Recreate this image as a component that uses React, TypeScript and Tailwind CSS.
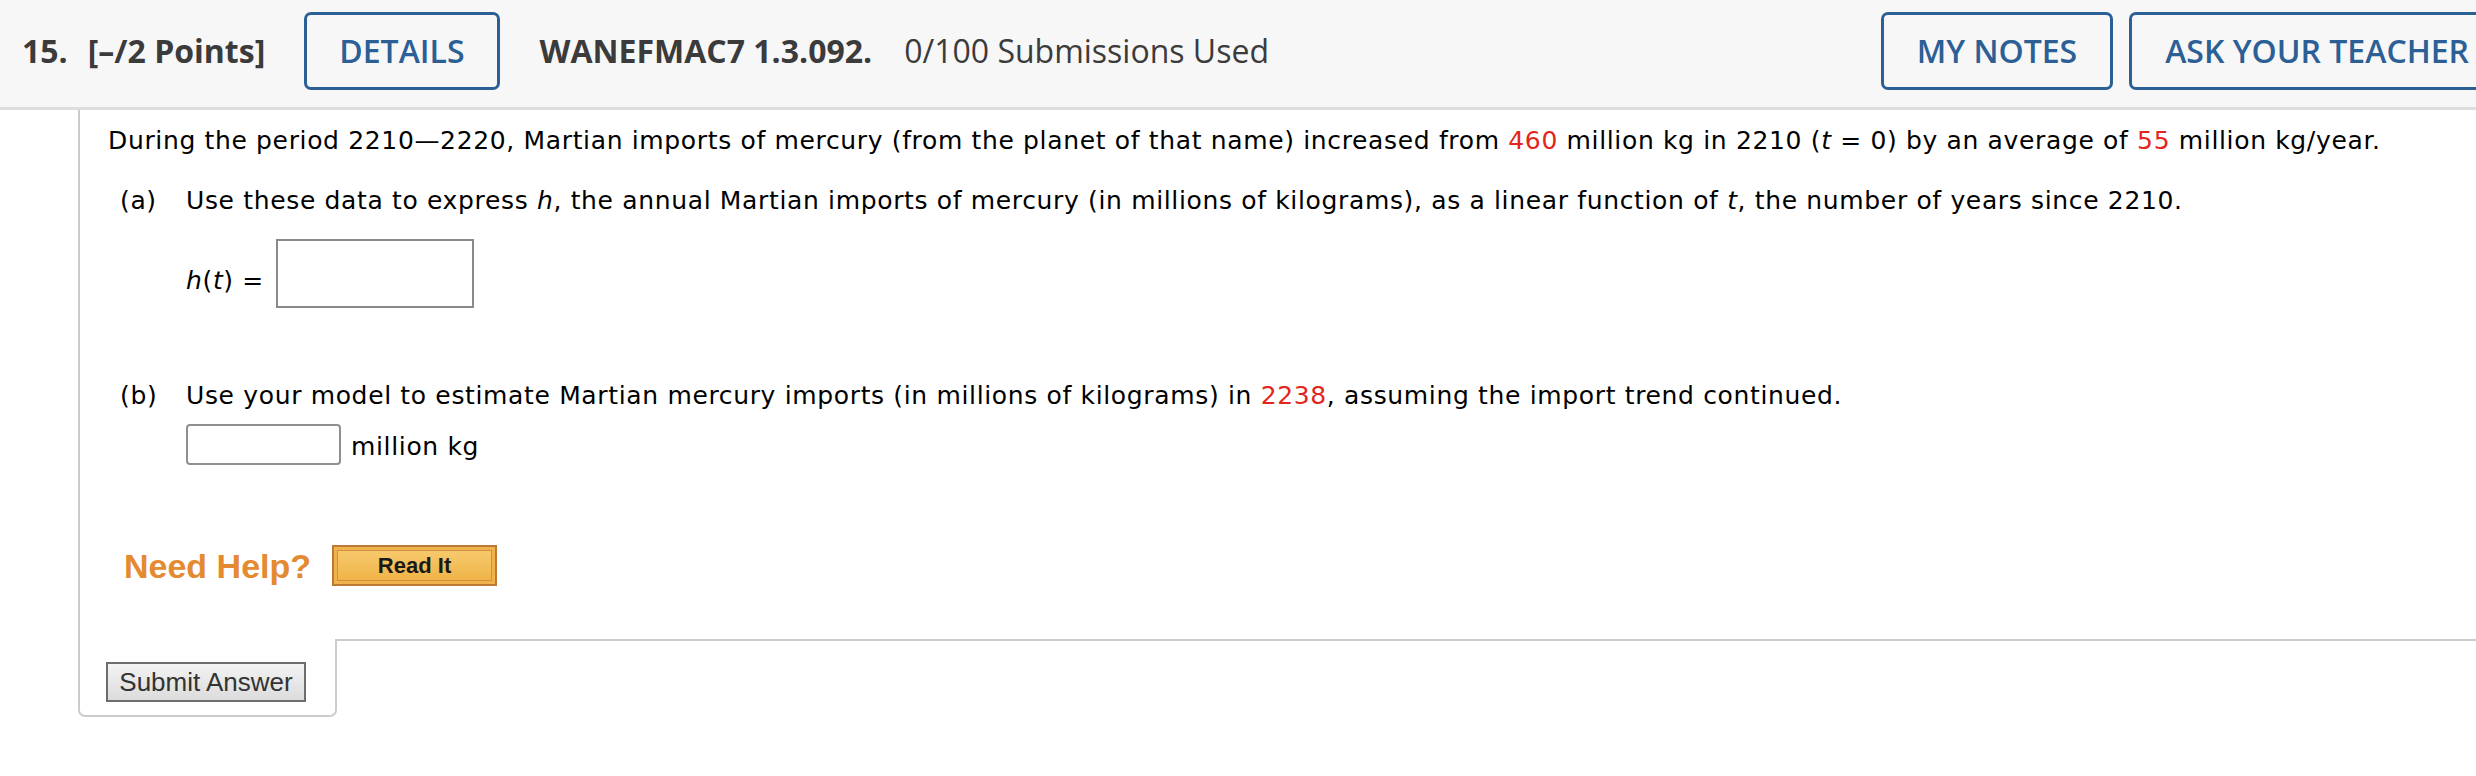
import React from "react"

const red = "text-[#e3261c]"

export default function App() {
  return (
    <div className="w-full min-h-screen overflow-hidden bg-white">
      {/* Question header */}
      <header
        className="flex items-center h-[110px] pb-[5px] pl-[22px] bg-[#f7f7f7] border-b-[3px] border-[#dedede] text-[32px] text-[#3b3b3b] whitespace-nowrap"
        style={{ fontFamily: '"Open Sans", sans-serif' }}
      >
        <span className="font-bold">15.</span>
        <span className="font-bold ml-[20px]">[–/2 Points]</span>
        <button className="ml-[39px] h-[78px] px-[32px] rounded-[7px] border-[3px] border-[#2b5f95] text-[#2b5f95] font-semibold">
          DETAILS
        </button>
        <span className="font-bold ml-[40px]">WANEFMAC7 1.3.092.</span>
        <span className="ml-[32px]">0/100 Submissions Used</span>
        <button className="ml-auto h-[78px] px-[33px] rounded-[7px] border-[3px] border-[#2b5f95] text-[#2b5f95] font-semibold">
          MY NOTES
        </button>
        <button className="ml-[16px] -mr-[29px] h-[78px] px-[33px] rounded-[7px] border-[3px] border-[#2b5f95] text-[#2b5f95] font-semibold">
          ASK YOUR TEACHER
        </button>
      </header>

      <div className="pl-[78px]">
        {/* Question body */}
        <div
          className="border-l-2 border-[#cccccc] pl-[28px] pt-[13px] pb-[53px] text-[25px] leading-[36px] tracking-[0.65px] text-black whitespace-nowrap"
          style={{ fontFamily: '"DejaVu Sans", Verdana, sans-serif' }}
        >
          <p>
            During the period 2210—2220, Martian imports of mercury (from the planet of that name) increased from{" "}
            <span className={red}>460</span> million kg in 2210 (<i>t</i> = 0) by an average of{" "}
            <span className={red}>55</span> million kg/year.
          </p>

          <div className="mt-[24px] pl-[12px]">
            <div className="flex">
              <span className="w-[66px]">(a)</span>
              <span>
                Use these data to express <i>h</i>, the annual Martian imports of mercury (in millions of kilograms), as
                a linear function of <i>t</i>, the number of years since 2210.
              </span>
            </div>
            <div className="flex items-end mt-[20px] pl-[66px]">
              <span className="mb-[9px] mr-[12px]">
                <i>h</i>(<i>t</i>) =
              </span>
              <input className="w-[198px] h-[69px] border-2 border-[#8a8a8a] bg-white" />
            </div>

            <div className="flex mt-[70px]">
              <span className="w-[66px]">(b)</span>
              <span>
                Use your model to estimate Martian mercury imports (in millions of kilograms) in{" "}
                <span className={red}>2238</span>, assuming the import trend continued.
              </span>
            </div>
            <div className="flex items-end mt-[10px] pl-[66px]">
              <input className="w-[155px] h-[41px] border-2 border-[#8f8f8f] rounded-[4px] bg-white" />
              <span className="ml-[10px]">million kg</span>
            </div>
          </div>

          {/* Help */}
          <div className="flex items-center mt-[80px] pl-[16px]" style={{ fontFamily: '"Liberation Sans", Arial, sans-serif' }}>
            <span className="text-[34px] leading-[40px] tracking-normal font-bold text-[#e48a30]">Need Help?</span>
            <div className="ml-[21px] w-[165px] h-[41px] border-2 border-[#bd7a34] bg-[#f0b24c] p-[3px]">
              <div className="h-full flex items-center justify-center border border-[#cf9040] bg-gradient-to-b from-[#f7c96c] to-[#efb447] text-[22px] leading-none tracking-normal font-bold text-[#1a1a1a]">
                Read It
              </div>
            </div>
          </div>
        </div>

        {/* Submit tab */}
        <div className="flex">
          <div className="w-[259px] h-[78px] border-l-2 border-r-2 border-b-2 border-[#cccccc] rounded-b-[7px] pl-[26px] pt-[23px]">
            <button
              className="w-[200px] h-[40px] border-2 border-[#6d6d6d] bg-gradient-to-b from-[#f3f3f3] to-[#dcdcdc] text-[26px] leading-none text-[#333333]"
              style={{ fontFamily: '"Liberation Sans", Arial, sans-serif' }}
            >
              Submit Answer
            </button>
          </div>
          <div className="flex-1 border-t-2 border-[#cccccc]" />
        </div>
      </div>
    </div>
  )
}
